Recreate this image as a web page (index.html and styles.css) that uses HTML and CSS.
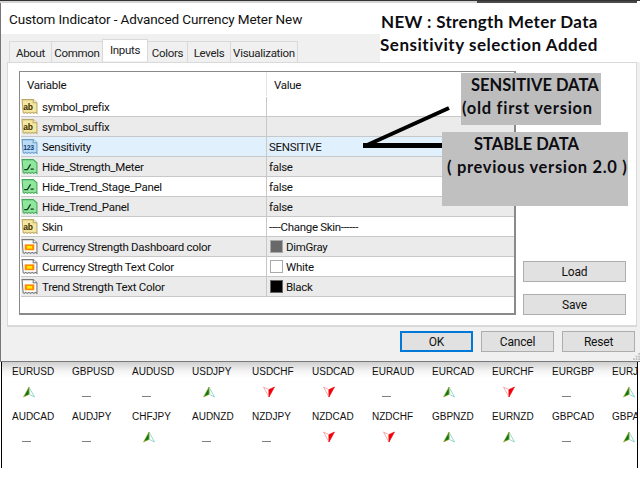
FILE: index.html
```html
<!DOCTYPE html>
<html lang="en">
<head>
<meta charset="utf-8">
<title>Custom Indicator</title>
<link rel="stylesheet" href="styles.css">
</head>
<body>
<svg class="defs" width="0" height="0" aria-hidden="true">
  <symbol id="i-ab" viewBox="0 0 16 16">
    <path d="M1 1.500h10.500l3.500 3v10l-1.500-1-1.500 1-1.500-1-1.500 1-1.500-1-1.500 1-1.500-1-1.500 1-1-.8z" fill="#f6e7a0" stroke="#b9a868"/>
    <path d="M11.500 1.500v3h3.500" fill="#fff8d8" stroke="#b9a868"/>
    <text x="2" y="11.500" class="ic-ab">ab</text>
  </symbol>
  <symbol id="i-num" viewBox="0 0 16 16">
    <path d="M1 1.500h10.500l3.500 3v10l-1.500-1-1.500 1-1.500-1-1.500 1-1.500-1-1.500 1-1.500-1-1.500 1-1-.8z" fill="#bcdcf5" stroke="#6d9cc4"/>
    <path d="M11.500 1.500v3h3.500" fill="#e6f3fc" stroke="#6d9cc4"/>
    <text x="2" y="11" class="ic-num">123</text>
  </symbol>
  <symbol id="i-bool" viewBox="0 0 16 16">
    <path d="M1 1.500h10.500l3.500 3v10l-1.500-1-1.500 1-1.500-1-1.500 1-1.500-1-1.500 1-1.500-1-1.500 1-1-.8z" fill="#8fe69c" stroke="#45a85a"/>
    <path d="M3 11h3l3-5M9 10.500h3" fill="none" stroke="#123a1c" stroke-width="1.200"/>
  </symbol>
  <symbol id="i-color" viewBox="0 0 16 16">
    <path d="M1 1.500h10.500l3.500 3v10l-1.500-1-1.500 1-1.500-1-1.500 1-1.500-1-1.500 1-1.500-1-1.500 1-1-.8z" fill="#fbfbfb" stroke="#777"/>
    <path d="M11.500 1.500v3h3.500" fill="#fff" stroke="#777"/>
    <rect x="3.500" y="6" width="9" height="5.500" fill="#ff8a00"/>
    <rect x="5.500" y="7.500" width="5" height="2.500" fill="#ffe800"/>
  </symbol>
  <symbol id="i-up" viewBox="0 0 12 12">
    <path d="M6 1 11.500 11 6.500 8.500z" fill="#fff" stroke="#7fcfc4" stroke-width=".8"/>
    <path d="M6 1 .5 11 6 8.500z" fill="#067a14" stroke="#b9a52a" stroke-width=".6"/>
  </symbol>
  <symbol id="i-down" viewBox="0 0 12 12">
    <path d="M6 11 .5 1 5.500 3.500z" fill="#fff" stroke="#f29a9a" stroke-width=".8"/>
    <path d="M6 11 11.500 1 6 3.500z" fill="#f4000c" stroke="#f4000c" stroke-width=".6"/>
  </symbol>
  <symbol id="i-dash" viewBox="0 0 12 12">
    <rect x="0" y="10" width="9" height="1" fill="#808080"/>
  </symbol>
</svg>

<div class="dialog">
  <div class="top-strip"></div>
  <div class="title">Custom Indicator - Advanced Currency Meter New</div>
  <div class="tabs">
    <span class="tab t-about">About</span>
    <span class="tab t-common">Common</span>
    <span class="tab tab-active">Inputs</span>
    <span class="tab t-colors">Colors</span>
    <span class="tab t-levels">Levels</span>
    <span class="tab t-vis">Visualization</span>
  </div>
  <div class="panel">
    <div class="table">
      <div class="row head"><div class="c1"><span class="head-label">Variable</span></div><div class="c2"><span class="head-value">Value</span></div></div>
      <div class="row"><div class="c1"><svg class="ic"><use href="#i-ab"/></svg>symbol_prefix</div><div class="c2"></div></div>
      <div class="row alt"><div class="c1"><svg class="ic"><use href="#i-ab"/></svg>symbol_suffix</div><div class="c2"></div></div>
      <div class="row sel"><div class="c1"><svg class="ic"><use href="#i-num"/></svg>Sensitivity</div><div class="c2">SENSITIVE</div></div>
      <div class="row alt"><div class="c1"><svg class="ic"><use href="#i-bool"/></svg>Hide_Strength_Meter</div><div class="c2">false</div></div>
      <div class="row"><div class="c1"><svg class="ic"><use href="#i-bool"/></svg>Hide_Trend_Stage_Panel</div><div class="c2">false</div></div>
      <div class="row alt"><div class="c1"><svg class="ic"><use href="#i-bool"/></svg>Hide_Trend_Panel</div><div class="c2">false</div></div>
      <div class="row"><div class="c1"><svg class="ic"><use href="#i-ab"/></svg>Skin</div><div class="c2">----Change Skin------</div></div>
      <div class="row alt"><div class="c1"><svg class="ic"><use href="#i-color"/></svg>Currency Strength Dashboard color</div><div class="c2"><i class="swatch s-gray"></i>DimGray</div></div>
      <div class="row"><div class="c1"><svg class="ic"><use href="#i-color"/></svg>Currency Stregth Text Color</div><div class="c2"><i class="swatch s-white"></i>White</div></div>
      <div class="row alt"><div class="c1"><svg class="ic"><use href="#i-color"/></svg>Trend Strength Text Color</div><div class="c2"><i class="swatch s-black"></i>Black</div></div>
    </div>
    <div class="side">
      <button class="btn side-btn">Load</button>
      <button class="btn side-btn">Save</button>
    </div>
  </div>
  <div class="footer">
    <button class="btn foot-btn btn-default">OK</button>
    <button class="btn foot-btn">Cancel</button>
    <button class="btn foot-btn">Reset</button>
  </div>
</div>

<div class="chart">
  <div class="sym"><span>EURUSD</span><svg class="arrow"><use href="#i-up"/></svg></div>
  <div class="sym"><span>GBPUSD</span><svg class="arrow dash"><use href="#i-dash"/></svg></div>
  <div class="sym"><span>AUDUSD</span><svg class="arrow dash"><use href="#i-dash"/></svg></div>
  <div class="sym"><span>USDJPY</span><svg class="arrow"><use href="#i-up"/></svg></div>
  <div class="sym"><span>USDCHF</span><svg class="arrow"><use href="#i-down"/></svg></div>
  <div class="sym"><span>USDCAD</span><svg class="arrow"><use href="#i-down"/></svg></div>
  <div class="sym"><span>EURAUD</span><svg class="arrow dash"><use href="#i-dash"/></svg></div>
  <div class="sym"><span>EURCAD</span><svg class="arrow"><use href="#i-up"/></svg></div>
  <div class="sym"><span>EURCHF</span><svg class="arrow"><use href="#i-down"/></svg></div>
  <div class="sym"><span>EURGBP</span><svg class="arrow dash"><use href="#i-dash"/></svg></div>
  <div class="sym"><span>EURJPY</span><svg class="arrow"><use href="#i-up"/></svg></div>
  <div class="sym"><span>AUDCAD</span><svg class="arrow dash"><use href="#i-dash"/></svg></div>
  <div class="sym"><span>AUDJPY</span><svg class="arrow dash"><use href="#i-dash"/></svg></div>
  <div class="sym"><span>CHFJPY</span><svg class="arrow"><use href="#i-up"/></svg></div>
  <div class="sym"><span>AUDNZD</span><svg class="arrow dash"><use href="#i-dash"/></svg></div>
  <div class="sym"><span>NZDJPY</span><svg class="arrow dash"><use href="#i-dash"/></svg></div>
  <div class="sym"><span>NZDCAD</span><svg class="arrow"><use href="#i-down"/></svg></div>
  <div class="sym"><span>NZDCHF</span><svg class="arrow"><use href="#i-down"/></svg></div>
  <div class="sym"><span>GBPNZD</span><svg class="arrow"><use href="#i-up"/></svg></div>
  <div class="sym"><span>EURNZD</span><svg class="arrow"><use href="#i-up"/></svg></div>
  <div class="sym"><span>GBPCAD</span><svg class="arrow dash"><use href="#i-dash"/></svg></div>
  <div class="sym"><span>GBPAUD</span><svg class="arrow"><use href="#i-up"/></svg></div>
</div>

<svg class="grip" viewBox="0 0 8 8">
  <path d="M6 0h2v2H6zM3 3h2v2H3zM6 3h2v2H6zM0 6h2v2H0zM3 6h2v2H3zM6 6h2v2H6z" fill="#bdbdbd"/>
</svg>
<div class="note note-new"><div class="wide1">NEW : Strength Meter Data</div><div class="wide2">Sensitivity selection Added</div></div>
<svg class="pointer" viewBox="0 0 100 50">
  <path d="M86 4 2 42" stroke="#000" stroke-width="4" fill="none"/>
  <path d="M0 41.500H80" stroke="#000" stroke-width="5" fill="none"/>
</svg>
<div class="note note-sensitive"><div class="indent1">SENSITIVE DATA</div><div class="wide3">(old first version</div></div>
<div class="note note-stable"><div class="indent2">STABLE DATA</div><div class="wide4">( previous version 2.0 )</div></div>
</body>
</html>
```

FILE: styles.css
```css
* { box-sizing: border-box; }
html, body { margin: 0; padding: 0; }
body {
  position: relative;
  width: 640px;
  height: 480px;
  overflow: hidden;
  background: #fff;
  font-family: Roboto, "Open Sans", sans-serif;
  font-size: 11.500px;
  letter-spacing: -.3px;
  color: #111;
}
.defs { display: none; }
.ic-ab { font: 700 8px "Liberation Sans", sans-serif; letter-spacing: 0; fill: #3a3000; }
.ic-num { font: 700 6.500px "Liberation Sans", sans-serif; letter-spacing: -.2px; fill: #0e3d78; }

.dialog {
  height: 362px;
  background: #f0f0f0;
  border-left: 1px solid #767676;
  border-bottom: 1px solid #7a7a7a;
  display: flex;
  flex-direction: column;
}
.top-strip {
  height: 3px;
  margin-left: -1px;
  background: linear-gradient(90deg, #d4d4d4 0 477px, #4a4a4a 477px 637px, #fff 637px);
  border-top: 1px solid #333;
}
.title {
  height: 31px;
  background: #fff;
  padding: 5px 0 0 8px;
  font-size: 13.500px;
  letter-spacing: -.12px;
  line-height: 22px;
  color: #111;
}
.tabs {
  height: 28px;
  padding: 7px 0 0 8px;
  display: flex;
  align-items: flex-start;
}
.tab {
  height: 21px;
  background: #f0f0f0;
  border: 1px solid #d9d9d9;
  border-bottom: 0;
  margin-left: -1px;
  padding-top: 3px;
  line-height: 17px;
  text-align: center;
  color: #222;
}
.t-about { width: 43px; margin-left: 0; }
.t-common { width: 52px; }
.t-colors { width: 41px; }
.t-levels { width: 44px; }
.t-vis { width: 68px; }
.tab-active {
  width: 46px;
  height: 22px;
  margin-top: -2px;
  margin-bottom: -1px;
  background: #fff;
  padding-top: 2px;
  position: relative;
  z-index: 1;
}
.panel {
  height: 265px;
  margin: 0 3px 0 6px;
  background: #fff;
  border: 1px solid #d9d9d9;
  border-width: 1px 1px 2px 1px;
  padding: 8px 10px 10px 11px;
  display: flex;
  justify-content: space-between;
}
.table {
  width: 497px;
  border: 1px solid #8a8a8a;
  border-width: 1px 2px 2px 1px;
  padding-left: 1px;
}
.row {
  display: flex;
  height: 20px;
  border-bottom: 1px solid #c8c8c8;
  line-height: 19px;
  white-space: nowrap;
}
.head { height: 25px; border-bottom: 0; line-height: 26px; }
.head-label { padding-left: 6px; }
.head-value { padding-left: 5px; line-height: 28px; }
.head .c2 { border-left: 1px solid #e4e4e4; height: 24px; }
.alt { background: #ebebeb; }
.sel { background: #e1f0fd; }
.c1 { width: 245px; display: flex; align-items: center; gap: 4px; overflow: hidden; padding-top: 1px; }
.c2 {
  flex: 1;
  border-left: 1px solid #c8c8c8;
  padding: 1px 0 0 2px;
  display: flex;
  align-items: center;
}
.ic { width: 17px; height: 17px; flex: none; margin-top: -1px; }
.swatch {
  display: block;
  width: 13px;
  height: 13px;
  margin: -1px 3px 0 1px;
  border: 1px solid #aaa;
}
.s-gray { background: #696969; }
.s-white { background: #fff; }
.s-black { background: #000; border-color: #666; }
.side {
  width: 103px;
  display: flex;
  flex-direction: column;
  justify-content: flex-end;
  gap: 12px;
}
.btn {
  display: block;
  padding: 0;
  height: 21px;
  background: #e1e1e1;
  border: 1px solid #adadad;
  font: 12px Roboto, "Open Sans", sans-serif;
  letter-spacing: -.2px;
  color: #111;
}
.side-btn { width: 103px; }
.footer {
  flex: 1;
  padding: 4px 5px 0 0;
  display: flex;
  justify-content: flex-end;
  gap: 8px;
}
.foot-btn { width: 73px; }
.btn-default { border: 2px solid #0078d7; }

.chart {
  height: 106px;
  margin-left: 1px;
  width: 637px;
  border-left: 1px solid #000;
  border-right: 1px solid #000;
  padding: 2px 0 0 10px;
  display: grid;
  grid-template-columns: repeat(11, 60px);
  grid-auto-rows: 45px;
  overflow: hidden;
  background: linear-gradient(180deg, #cfcfcf 0, #f4f4f4 9px, #fff 16px);
  font: 10px "Liberation Sans", sans-serif;
  letter-spacing: 0;
  color: #111;
}
.sym { display: flex; flex-direction: column; align-items: flex-start; white-space: nowrap; }
.sym span { line-height: 14px; height: 14px; margin-top: 1px; }
.arrow { width: 12px; height: 12px; margin: 7px 0 0 11px; }
.dash { margin-left: 10px; }

.grip {
  position: absolute;
  left: 633px;
  top: 353px;
  width: 7px;
  height: 7px;
}
.note {
  position: absolute;
  font-family: Lato, "Open Sans", sans-serif;
  font-weight: 700;
  font-size: 16.500px;
  letter-spacing: 0;
  color: #0d0d12;
  white-space: nowrap;
}
.note-new {
  left: 380px;
  top: 3px;
  width: 260px;
  height: 59px;
  background: #fff;
  padding: 7px 0 0 1px;
  line-height: 23px;
  font-size: 17px;
}
.wide1 { letter-spacing: .32px; }
.wide2 { letter-spacing: .52px; margin-left: -1px; }
.wide3 { letter-spacing: .72px; }
.wide4 { letter-spacing: .68px; }
.note-sensitive {
  left: 461px;
  top: 73px;
  width: 140px;
  height: 52px;
  background: #bdbdbd;
  padding: 1px 0 0 1px;
  line-height: 23px;
}
.note-stable {
  left: 442px;
  top: 132px;
  width: 186px;
  height: 74px;
  background: #c0c0c0;
  padding: 1px 0 0 5px;
  line-height: 23px;
}
.indent1 { padding-left: 9px; }
.indent2 { padding-left: 27px; }
.pointer {
  position: absolute;
  left: 363px;
  top: 104px;
  width: 100px;
  height: 50px;
}
```
